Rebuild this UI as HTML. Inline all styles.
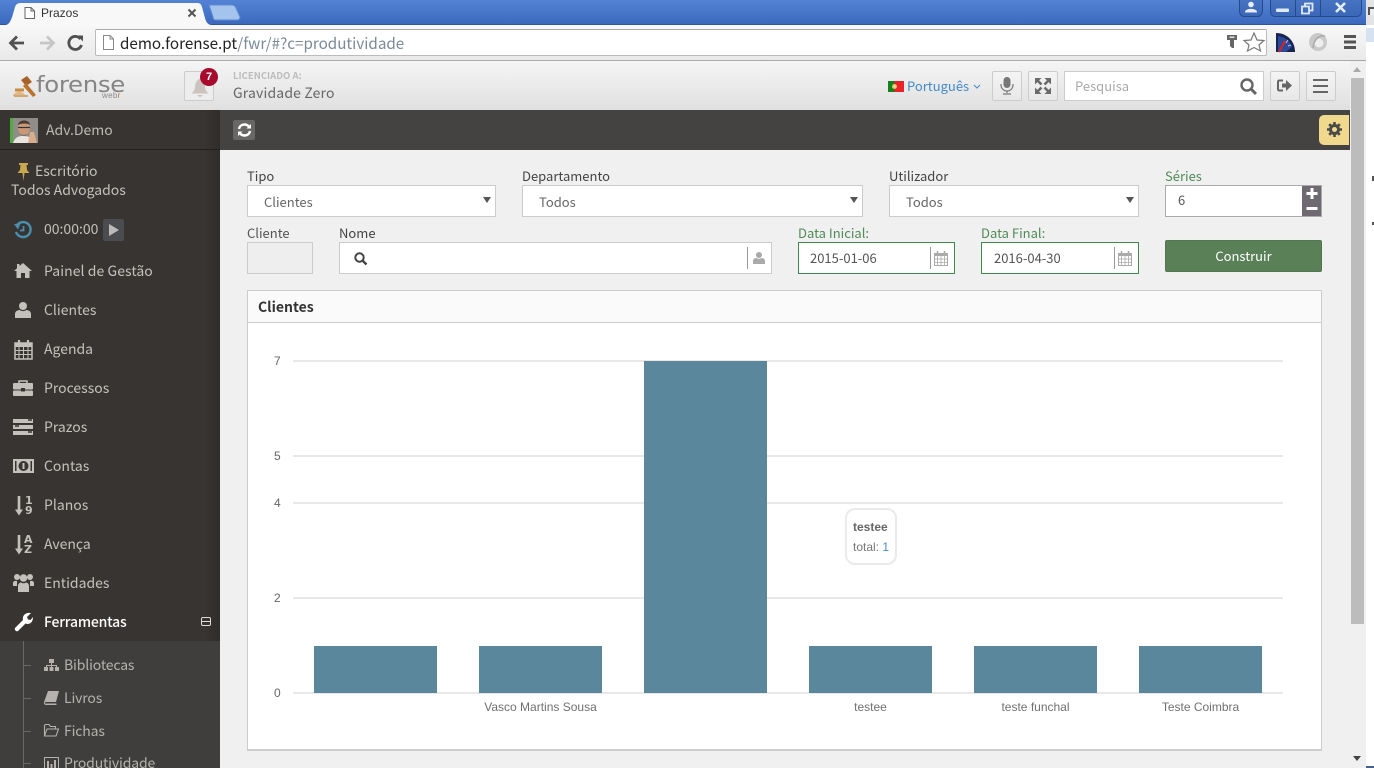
<!DOCTYPE html>
<html><head><meta charset="utf-8"><title>Prazos</title>
<style>
html,body{margin:0;padding:0;width:1374px;height:768px;overflow:hidden;background:#f0f0f0}
body{position:relative;font-family:"Noto Sans CJK JP","Liberation Sans",sans-serif;font-size:13px;color:#555}
.a{position:absolute;box-sizing:border-box}
.t{position:absolute;white-space:nowrap;line-height:20px;height:20px}
.m{color:#c4c0bb;font-size:14px;left:44px}
.s{color:#b5b2ae;font-size:14px;left:64px;letter-spacing:-.15px}
.l{color:#444;font-size:13px}
.g{color:#4f8a57;font-size:13px}
.box{position:absolute;box-sizing:border-box;background:#fff;border:1px solid #ccc}
.btn{position:absolute;box-sizing:border-box;width:30px;height:30px;top:71px;border:1px solid #ccc;border-radius:2px;background:linear-gradient(#f4f4f4,#e8e8e8)}
.ax{position:absolute;font:12px/14px "Liberation Sans",sans-serif;color:#666;white-space:nowrap}
.xl{position:absolute;top:700px;width:165px;text-align:center;font:12px/14px "Liberation Sans",sans-serif;color:#707070;white-space:nowrap}
.gl{position:absolute;left:293px;width:990px;height:2px;background:#e8e8e8}
.bar{position:absolute;width:123px;background:#5a879c}
.d{position:absolute;font:bold 11px/12px "DejaVu Sans",sans-serif;height:12px;color:#c4c0bb;white-space:nowrap}
svg{position:absolute;overflow:visible}
</style></head><body>

<!-- Browser frame -->
<div class="a" style="left:0;top:0;width:1366px;height:25px;background:linear-gradient(#5482d4,#3c69be);border-bottom:1px solid #2f5597"></div>
<svg style="left:0;top:0" width="260" height="26"><path d="M0 25H5C9 25 11 21 13 14L15 7C16 4 18 3 21 3H197C200 3 201 4 202 7L205 18C206 22 208 25 212 25V26H0Z" fill="#f8f8f8"/><path d="M209 5H232C234 5 235 6 236 8L240 17C240 19 239 20 237 20H216C214 20 213 19 213 17L209 5Z" fill="#a4c4ee" stroke="#5d8ad0"/>
<path d="M25 7.500H31L34.500 11V18.500H25Z" fill="#fff" stroke="#666"/><path d="M31 7.500V11H34.500" fill="none" stroke="#666"/>
<path d="M188.500 9.500L195.500 16.500M195.500 9.500L188.500 16.500" stroke="#555" stroke-width="2"/></svg>
<div class="t" style="left:41px;top:3px;font:12px/20px 'Liberation Sans',sans-serif;color:#333">Prazos</div>
<div class="a" style="left:0;top:25px;width:1366px;height:36px;background:linear-gradient(#f8f8f8,#e9e9e9);border-bottom:1px solid #a9a9a9"></div>
<svg style="left:0;top:25px" width="90" height="36"><path d="M24 18H11M17 11.500L10.500 18L17 24.500" fill="none" stroke="#505050" stroke-width="2.800"/><path d="M53 18H40M47 11.500L53.500 18L47 24.500" fill="none" stroke="#c6c6c6" stroke-width="2.800"/><path d="M80.500 14A6.500 6.500 0 1 0 81.500 20" fill="none" stroke="#505050" stroke-width="2.800"/><path d="M77 9.500H83V15.500Z" fill="#505050" transform="translate(0,1)"/></svg>
<div class="a" style="left:95px;top:29px;width:1172px;height:27px;background:#fff;border:1px solid #bbb;border-top-color:#aaa;border-radius:2px"></div>
<svg style="left:103px;top:35px" width="12" height="16"><path d="M.500.500H7L10.500 4V14.500H.500Z" fill="#fff" stroke="#888"/><path d="M7 .500V4H10.500" fill="none" stroke="#888"/></svg>
<div class="t" style="left:120px;top:32px;font-size:15.200px;height:22px;line-height:22px;color:#7a8a97"><span style="color:#222">demo.forense.pt</span>/fwr/#?c=produtividade</div>
<svg style="left:1220px;top:28px" width="154" height="30">
<circle cx="11" cy="9" r="0" fill="none"/>
<path d="M7 7H17V12H14V20H12L10 18V12H7Z" fill="#666"/><rect x="9.500" y="8.500" width="5" height="1.500" fill="#ddd"/>
<path d="M34 7L37 14L44 14.500L39 19L40.500 25L34 21.500L27.500 25L29 19L24 14.500L31 14Z" fill="#fff" stroke="#777" stroke-width="1.200" transform="translate(0,-2)"/>
<path d="M56 5C67 5 75 13 75 24H56Z" fill="#1a2252"/><path d="M58 8C65 9 70 13 72 19L66 24H58Z" fill="#2c4a9a"/><path d="M59 24L65 13" stroke="#e02020" stroke-width="2"/><path d="M68 12L66 15M71 17L68 18" stroke="#b8c4e8"/>
<circle cx="98" cy="14" r="9" fill="#c9c9c9"/><circle cx="99" cy="15" r="4.500" fill="#eee"/><path d="M93 20C94 10 100 7 105 8" fill="none" stroke="#aaa" stroke-width="1.500"/>
<path d="M124 9H136V12H124ZM124 14.500H136V17.500H124ZM124 20H136V23H124Z" fill="#555" transform="translate(0,-2)"/></svg>
<!-- window controls -->
<svg style="left:1239px;top:0" width="130" height="18"><path d="M.500 0V11C.500 14 2 16.500 5 16.500H19C21 16.500 23.500 14 23.500 11V0M31.500 0V11C31.500 14 33 16.500 36 16.500H118C120 16.500 122.500 15 122.500 11V0M56.500 0V16M81.500 0V16" fill="rgba(30,70,140,.25)" stroke="#254a8a"/>
<circle cx="12" cy="4.500" r="2.800" fill="#e8effa"/><path d="M6.500 12C6.500 8.500 17.500 8.500 17.500 12Z" fill="#e8effa" stroke="#e8effa"/>
<rect x="37" y="8.500" width="13" height="3.500" rx="1" fill="#dfe8f8"/>
<path d="M63 6.500H70V13.500H63ZM66 6V3.500H73.500V10.500H70.500" fill="none" stroke="#dfe8f8" stroke-width="1.800"/>
<path d="M97 3L106 12M106 3L97 12" stroke="#e6edf8" stroke-width="2.600"/></svg>
<div class="a" style="left:1366px;top:0;width:8px;height:768px;background:#fff"></div>
<div class="a" style="left:1366px;top:0;width:8px;height:25px;background:#e4e4e4"></div>
<div class="a" style="left:1368px;top:7px;width:6px;height:8px;border:2px solid #555;border-right:0;border-bottom:0;background:#eee"></div>
<div class="a" style="left:1366px;top:28px;width:8px;height:14px;background:#d6e2f2"></div>
<div class="a" style="left:1372px;top:176px;width:2px;height:5px;background:#555"></div>
<div class="a" style="left:1372px;top:222px;width:2px;height:3px;background:#555"></div>
<div class="a" style="left:1366px;top:766px;width:8px;height:2px;background:#47618c"></div>

<!-- App header -->
<div class="a" style="left:0;top:61px;width:1350px;height:49px;background:linear-gradient(#f5f5f5,#e0e0e0)"></div>
<svg style="left:12px;top:75px" width="26" height="24"><path d="M1 20C5 15 11 16 14 21H1Z" fill="#e4b884"/><path d="M9 5L15 1L20 7L14 11Z" fill="#a5622a"/><path d="M14 8L24 20L21 22L11 11Z" fill="#b9732f"/><path d="M3 15H12" stroke="#c98a45" stroke-width="3"/><path d="M2 21H16" stroke="#d0a878" stroke-width="2"/></svg>
<div class="t" style="left:36px;top:71px;height:30px;font:22px/30px 'DejaVu Sans','Liberation Sans',sans-serif;letter-spacing:-.3px;color:#858585;transform-origin:left center;transform:scaleX(1.110)">forense</div>
<div class="t" style="left:102px;top:91px;font:8px/10px 'Liberation Sans',sans-serif;height:10px;color:#888;letter-spacing:.3px">web<span style="color:#b9732f">r</span></div>

<div class="a" style="left:184px;top:71px;width:30px;height:30px;border:1px solid #ccc;border-radius:2px;background:#ededed"></div>
<svg style="left:190px;top:78px" width="20" height="20"><path d="M10 0.500C13 2 15 5 15 9C15 12 17 14 18.500 15.500H1.500C3 14 5 12 5 9C5 5 7 2 10 .500ZM7.500 17H12.500C12 19.500 8 19.500 7.500 17Z" fill="#cbc3bd"/></svg>
<div class="a" style="left:200px;top:68px;width:18px;height:18px;border-radius:50%;background:#a70a2d;color:#fff;font:bold 11px/18px 'Liberation Sans',sans-serif;text-align:center">7</div>
<div class="t" style="left:233px;top:65px;font-size:9.500px;font-weight:700;color:#bdbdbd">LICENCIADO A:</div>
<div class="t" style="left:233px;top:83px;font-size:14px;color:#666;letter-spacing:.15px">Gravidade Zero</div>

<svg style="left:888px;top:81px" width="17" height="12"><rect width="16" height="11" fill="#e8242a"/><rect width="6.500" height="11" fill="#17801f"/><circle cx="6.500" cy="5.500" r="2.500" fill="#e9c54d"/><circle cx="6.500" cy="5.500" r="1.200" fill="#d9d9d9"/></svg>
<div class="t" style="left:907px;top:76px;font-size:13px;color:#428bca">Português</div>
<svg style="left:973px;top:84px" width="9" height="6"><path d="M1 1L4 4L7 1" fill="none" stroke="#428bca"/></svg>

<div class="btn" style="left:992px"></div>
<svg style="left:1000px;top:77px" width="14" height="19"><rect x="3.500" y="0" width="7" height="11" rx="3.500" fill="#777"/><path d="M1 7V8A6 6 0 0 0 13 8V7M7 14V16M3 17H11" fill="none" stroke="#777" stroke-width="1.200"/></svg>
<div class="btn" style="left:1028px"></div>
<svg style="left:1035px;top:78px" width="16" height="16"><path d="M0 0H6.500L0 6.500ZM16 0V6.500L9.500 0ZM0 16V9.500L6.500 16ZM16 16H9.500L16 9.500Z" fill="#6a6a6a"/><path d="M2.500 2.500L6.500 6.500M13.500 2.500L9.500 6.500M2.500 13.500L6.500 9.500M13.500 13.500L9.500 9.500" stroke="#6a6a6a" stroke-width="2.600"/></svg>
<div class="box" style="left:1064px;top:71px;width:200px;height:30px"></div>
<div class="t" style="left:1075px;top:76px;font-size:13px;color:#a9a9a9">Pesquisa</div>
<svg style="left:1240px;top:78px" width="18" height="18"><circle cx="7" cy="7" r="5.500" fill="none" stroke="#666" stroke-width="2.400"/><path d="M11 11L16 16" stroke="#666" stroke-width="3"/></svg>
<div class="btn" style="left:1270px"></div>
<svg style="left:1277px;top:79px" width="16" height="14"><path d="M6 1.500H2.500C1.500 1.500 1 2 1 3V10C1 11 1.500 11.500 2.500 11.500H6" fill="none" stroke="#666" stroke-width="2"/><path d="M5 4.500H9V1L15 6.500L9 12V8.500H5Z" fill="#666"/></svg>
<div class="btn" style="left:1306px"></div>
<svg style="left:1313px;top:79px" width="16" height="14"><path d="M0 1H15M0 7H15M0 13H15" stroke="#666" stroke-width="2"/></svg>

<!-- Dark bars -->
<div class="a" style="left:220px;top:110px;width:1130px;height:40px;background:#454342"></div>
<div class="a" style="left:0;top:110px;width:220px;height:658px;background:linear-gradient(90deg,#383432 0,#383432 205px,#2f2c2a 220px)"></div>
<div class="a" style="left:0;top:149px;width:220px;height:1px;background:#232120"></div>
<div class="a" style="left:10px;top:118px;width:3px;height:25px;background:#4cae3c"></div>
<svg style="left:13px;top:118px" width="25" height="25"><rect width="25" height="25" fill="#8f8c89"/><path d="M0 25C2 19 6 18 10 18C16 18 20 20 22 25Z" fill="#e8e4df"/><ellipse cx="11" cy="10" rx="6" ry="7.500" fill="#c99878"/><path d="M5 7C5.500 1 16.500 1 17 7C15 5 8 5 5 7Z" fill="#4a3a30"/><path d="M5.500 13C7 19 15 19 16.500 13L15.500 15.500C13 17.500 9 17.500 6.500 15.500Z" fill="#55463c"/><path d="M5 9.500H17" stroke="#333" stroke-width="1.200"/><path d="M15 25L17 14L21 14L24 25Z" fill="#d9ad8c"/></svg>
<div class="t" style="left:46px;top:120px;font-size:14px;color:#bdb9b4">Adv.Demo</div>
<div class="a" style="left:233px;top:120px;width:22px;height:20px;border-radius:2px;background:#696766"></div>
<svg style="left:237px;top:123px" width="15" height="14"><path d="M2 6C2.500 3 5 1.500 7.500 1.500C9.500 1.500 11 2.500 12 3.500" fill="none" stroke="#fff" stroke-width="2.400"/><path d="M9.500 5.500H14V1Z" fill="#fff"/><path d="M13 8C12.500 11 10 12.500 7.500 12.500C5.500 12.500 4 11.500 3 10.500" fill="none" stroke="#fff" stroke-width="2.400"/><path d="M5.500 8.500H1V13Z" fill="#fff"/></svg>
<div class="a" style="left:1319px;top:115px;width:30px;height:30px;background:#f0d98c;border-radius:5px 0 0 5px"></div>
<svg style="left:1327px;top:122px" width="15" height="15" viewBox="0 0 15 15"><circle cx="7.500" cy="7.500" r="4" fill="none" stroke="#4a4a4a" stroke-width="3"/><path d="M7.500 0V3M7.500 12V15M0 7.500H3M12 7.500H15M2.200 2.200L4.300 4.300M10.700 10.700L12.800 12.800M12.800 2.200L10.700 4.300M4.300 10.700L2.200 12.800" stroke="#4a4a4a" stroke-width="2.600"/></svg>

<!-- Sidebar -->
<svg style="left:16px;top:163px" width="14" height="18"><path d="M3 0H12V2H10.500L11 7L13.500 10H8.500L7.500 18L6.500 10H1.500L4 7L4.500 2H3Z" fill="#c9a84f"/></svg>
<div class="t" style="left:35px;top:161px;font-size:14px;color:#c4c0bb">Escritório</div>
<div class="t" style="left:11px;top:180px;font-size:14px;color:#c4c0bb">Todos Advogados</div>
<svg style="left:14px;top:221px" width="18" height="18"><path d="M2.500 5A7.500 7.500 0 1 1 2 11" fill="none" stroke="#4a90b0" stroke-width="2.400"/><path d="M0 3L6.500 2.500L4 8.500Z" fill="#4a90b0"/><path d="M9.500 5V9.500H6" fill="none" stroke="#4a90b0" stroke-width="1.800"/></svg>
<div class="t" style="left:44px;top:219px;font-size:14px;color:#c4c0bb">00:00:00</div>
<div class="a" style="left:103px;top:219px;width:21px;height:22px;border-radius:2px;background:#4a4c50"></div>
<svg style="left:109px;top:224px" width="11" height="12"><path d="M0 0L10 6L0 12Z" fill="#bdbab7"/></svg>

<svg style="left:14px;top:263px" width="18" height="15"><path d="M9 0L18 8H15.500V15H11V10H7V15H2.500V8H0L3 5.300V1H5.500V3L9 0Z" fill="#c4c0bb"/></svg>
<div class="t m" style="top:261px;letter-spacing:.06px">Painel de Gestão</div>
<svg style="left:15px;top:302px" width="16" height="16"><circle cx="8" cy="4" r="4" fill="#c4c0bb"/><path d="M0 16V12C0 9 3 8 5 8C6 9.500 10 9.500 11 8C13 8 16 9 16 12V16Z" fill="#c4c0bb"/></svg>
<div class="t m" style="top:300px">Clientes</div>
<svg style="left:14px;top:340px" width="19" height="19"><path d="M1 3H18V19H1Z" fill="none" stroke="#c4c0bb" stroke-width="1.500"/><rect x="1" y="3" width="17" height="4" fill="#c4c0bb"/><path d="M5 0V5M14 0V5" stroke="#c4c0bb" stroke-width="2.200"/><path d="M5 7V19M9.500 7V19M14 7V19M1 10.500H18M1 14.500H18" stroke="#c4c0bb"/></svg>
<div class="t m" style="top:339px">Agenda</div>
<svg style="left:13px;top:380px" width="20" height="16"><path d="M6 3V1H14V3" fill="none" stroke="#c4c0bb" stroke-width="1.500"/><rect y="3" width="20" height="6.500" rx="1" fill="#c4c0bb"/><rect y="10.500" width="20" height="5.500" rx="1" fill="#c4c0bb"/><rect x="8" y="8" width="4" height="3.500" fill="#383432"/></svg>
<div class="t m" style="top:378px">Processos</div>
<svg style="left:13px;top:419px" width="20" height="16"><path d="M0 0H20V4H0ZM0 6H20V10H0ZM0 12H20V16H0Z" fill="#c4c0bb"/><path d="M15 1H19M2 7H6M15 13H19" stroke="#383432" stroke-width="1.500"/></svg>
<div class="t m" style="top:417px">Prazos</div>
<svg style="left:13px;top:459px" width="21" height="14"><rect width="21" height="14" fill="#c4c0bb"/><circle cx="10.500" cy="7" r="5" fill="#383432"/><rect x="9.500" y="4" width="2" height="6" fill="#c4c0bb"/><rect x="2" y="2" width="1.500" height="10" fill="#383432"/><rect x="17.500" y="2" width="1.500" height="10" fill="#383432"/></svg>
<div class="t m" style="top:456px">Contas</div>
<svg style="left:15px;top:496px" width="9" height="20"><path d="M4 0V14" stroke="#c4c0bb" stroke-width="2.600"/><path d="M0 13.500H8L4 19.500Z" fill="#c4c0bb"/></svg>
<div class="d" style="left:25px;top:495px">1</div>
<div class="d" style="left:25px;top:505px">9</div>
<div class="t m" style="top:495px">Planos</div>
<svg style="left:15px;top:535px" width="9" height="20"><path d="M4 0V14" stroke="#c4c0bb" stroke-width="2.600"/><path d="M0 13.500H8L4 19.500Z" fill="#c4c0bb"/></svg>
<div class="d" style="left:24px;top:534px">A</div>
<div class="d" style="left:24px;top:544px">Z</div>
<div class="t m" style="top:534px">Avença</div>
<svg style="left:13px;top:573px" width="21" height="20"><circle cx="4" cy="4" r="3" fill="#c4c0bb"/><circle cx="17" cy="4" r="3" fill="#c4c0bb"/><circle cx="10.500" cy="5" r="3.800" fill="#c4c0bb"/><path d="M0 13V10C0 8 2 7.500 4 8V13ZM21 13V10C21 8 19 7.500 17 8V13Z" fill="#c4c0bb"/><path d="M5 19V13C5 10.500 7 9.500 8 9.500C9.500 10.500 11.500 10.500 13 9.500C14 9.500 16 10.500 16 13V19Z" fill="#c4c0bb"/></svg>
<div class="t m" style="top:573px">Entidades</div>
<svg style="left:14px;top:612px" width="19" height="20"><path d="M1 16L9 8C8 4 11 0 17 1L13 5L14 7.500L16.500 8L19 5C19 11 15 13 11.500 11.500L4 19C2.500 20 0 18 1 16Z" fill="#fff"/></svg>
<div class="t" style="left:44px;top:612px;font-size:14px;color:#fff;font-weight:500;letter-spacing:-.18px">Ferramentas</div>
<svg style="left:201px;top:617px" width="10" height="9"><rect x=".500" y=".500" width="9" height="8" rx="1.500" fill="none" stroke="#ddd"/><path d="M1 4.500H9" stroke="#ddd"/></svg>

<div class="a" style="left:0;top:641px;width:220px;height:127px;background:#3f3e3d"></div>
<div class="a" style="left:23px;top:641px;width:1px;height:127px;background:#6a6865"></div>
<div class="a" style="left:23px;top:665px;width:8px;height:1px;background:#6a6865"></div>
<div class="a" style="left:23px;top:698px;width:8px;height:1px;background:#6a6865"></div>
<div class="a" style="left:23px;top:731px;width:8px;height:1px;background:#6a6865"></div>
<div class="a" style="left:23px;top:763px;width:8px;height:1px;background:#6a6865"></div>
<svg style="left:44px;top:659px" width="15" height="12"><path d="M5 0H10V4H5ZM0 8H4V12H0ZM5.500 8H9.500V12H5.500ZM11 8H15V12H11ZM7 4H8V6H13V8H12V7H8V8H7V7H3V8H2V6H7Z" fill="#b5b2ae"/></svg>
<div class="t s" style="top:655px">Bibliotecas</div>
<svg style="left:44px;top:691px" width="15" height="14"><path d="M4 0H15L12 11H1L1 12.500H12.500V14H2C0 14 0 12 0 11Z" fill="#b5b2ae"/></svg>
<div class="t s" style="top:688px">Livros</div>
<svg style="left:44px;top:724px" width="15" height="13"><path d="M.500 12V2C.500 1 1 .500 2 .500H5L6.500 2.500H11.500V5M.500 12L3 5H14.500L12 12Z" fill="none" stroke="#b5b2ae" stroke-width="1.100"/></svg>
<div class="t s" style="top:721px">Fichas</div>
<svg style="left:44px;top:757px" width="15" height="13"><rect x=".500" y=".500" width="14" height="12" fill="none" stroke="#b5b2ae"/><path d="M3 4H5V12H3ZM6.500 7H8.500V12H6.500ZM10 3H12V12H10Z" fill="#b5b2ae"/></svg>
<div class="t s" style="top:753px">Produtividade</div>

<!-- Form -->
<div class="t l" style="left:247px;top:166px">Tipo</div>
<div class="box" style="left:247px;top:185px;width:249px;height:32px"></div>
<div class="t" style="left:264px;top:192px;color:#666;font-size:13px">Clientes</div>
<svg style="left:483px;top:197px" width="8" height="7"><path d="M0 0H8L4 6Z" fill="#555"/></svg>
<div class="t l" style="left:522px;top:166px">Departamento</div>
<div class="box" style="left:522px;top:185px;width:341px;height:32px"></div>
<div class="t" style="left:539px;top:192px;color:#666;font-size:13px">Todos</div>
<svg style="left:850px;top:197px" width="8" height="7"><path d="M0 0H8L4 6Z" fill="#555"/></svg>
<div class="t l" style="left:889px;top:166px">Utilizador</div>
<div class="box" style="left:889px;top:185px;width:250px;height:32px"></div>
<div class="t" style="left:906px;top:192px;color:#666;font-size:13px">Todos</div>
<svg style="left:1126px;top:197px" width="8" height="7"><path d="M0 0H8L4 6Z" fill="#555"/></svg>
<div class="t g" style="left:1165px;top:166px">Séries</div>
<div class="box" style="left:1165px;top:185px;width:157px;height:32px;border-color:#aaa"></div>
<div class="t" style="left:1178px;top:190px;color:#555;font-size:13px">6</div>
<div class="a" style="left:1302px;top:186px;width:19px;height:30px;background:#6f6a72"></div>
<svg style="left:1305px;top:187px" width="14" height="28"><path d="M7 1V12M1.500 6.500H12.500" stroke="#fff" stroke-width="3"/><path d="M1.500 21.500H12.500" stroke="#fff" stroke-width="3"/></svg>

<div class="t" style="left:247px;top:223px;color:#555;font-size:13px">Cliente</div>
<div class="a" style="left:247px;top:242px;width:66px;height:32px;background:#eee;border:1px solid #ccc"></div>
<div class="t l" style="left:339px;top:223px">Nome</div>
<div class="box" style="left:339px;top:242px;width:433px;height:32px"></div>
<svg style="left:354px;top:252px" width="14" height="14"><circle cx="5.500" cy="5.500" r="4.200" fill="none" stroke="#444" stroke-width="2"/><path d="M8.500 8.500L12.500 12.500" stroke="#444" stroke-width="2.400"/></svg>
<div class="a" style="left:747px;top:247px;width:1px;height:22px;background:#999"></div>
<svg style="left:753px;top:252px" width="12" height="12"><circle cx="6" cy="3" r="3" fill="#aaa"/><path d="M0 12V9C0 7 2 6 3.500 6C4.500 7 7.500 7 8.500 6C10 6 12 7 12 9V12Z" fill="#aaa"/></svg>
<div class="t g" style="left:798px;top:223px">Data Inicial:</div>
<div class="box" style="left:798px;top:242px;width:157px;height:32px;border-color:#3d8a4a"></div>
<div class="t" style="left:810px;top:248px;color:#555;font-size:13px">2015-01-06</div>
<div class="a" style="left:930px;top:247px;width:1px;height:22px;background:#999"></div>
<svg style="left:934px;top:251px" width="14" height="15"><rect x=".500" y="2.500" width="13" height="12" fill="none" stroke="#aaa"/><rect x="0" y="2" width="14" height="3" fill="#aaa"/><path d="M3.500 0V4M10.500 0V4" stroke="#aaa" stroke-width="1.500"/><path d="M3.500 5V15M7 5V15M10.500 5V15M0 8H14M0 11.500H14" stroke="#aaa" stroke-width=".8"/></svg>
<div class="t g" style="left:981px;top:223px">Data Final:</div>
<div class="box" style="left:981px;top:242px;width:158px;height:32px;border-color:#3d8a4a"></div>
<div class="t" style="left:994px;top:248px;color:#555;font-size:13px">2016-04-30</div>
<div class="a" style="left:1114px;top:247px;width:1px;height:22px;background:#999"></div>
<svg style="left:1118px;top:251px" width="14" height="15"><rect x=".500" y="2.500" width="13" height="12" fill="none" stroke="#aaa"/><rect x="0" y="2" width="14" height="3" fill="#aaa"/><path d="M3.500 0V4M10.500 0V4" stroke="#aaa" stroke-width="1.500"/><path d="M3.500 5V15M7 5V15M10.500 5V15M0 8H14M0 11.500H14" stroke="#aaa" stroke-width=".8"/></svg>
<div class="a" style="left:1165px;top:240px;width:157px;height:32px;background:#5a8058;border:1px solid #527650;border-radius:2px;color:#fff;text-align:center;font-size:13px;line-height:30px">Construir</div>

<!-- Panel -->
<div class="a" style="left:247px;top:290px;width:1075px;height:461px;background:#fff;border:1px solid #ccc;border-bottom:2px solid #ccc"></div>
<div class="a" style="left:248px;top:291px;width:1073px;height:32px;background:#fafafa;border-bottom:1px solid #ccc"></div>
<div class="t" style="left:258px;top:297px;font-size:14px;font-weight:700;color:#333">Clientes</div>

<div class="gl" style="top:360px"></div><div class="gl" style="top:455px"></div><div class="gl" style="top:502px"></div><div class="gl" style="top:597px"></div><div class="gl" style="top:692px"></div>
<div class="ax" style="left:274px;top:354px">7</div><div class="ax" style="left:274px;top:449px">5</div><div class="ax" style="left:274px;top:496px">4</div><div class="ax" style="left:274px;top:591px">2</div><div class="ax" style="left:274px;top:686px">0</div>
<div class="bar" style="left:314px;top:646px;height:47px"></div>
<div class="bar" style="left:479px;top:646px;height:47px"></div>
<div class="bar" style="left:644px;top:361px;height:332px"></div>
<div class="bar" style="left:809px;top:646px;height:47px"></div>
<div class="bar" style="left:974px;top:646px;height:47px"></div>
<div class="bar" style="left:1139px;top:646px;height:47px"></div>
<div class="xl" style="left:458px">Vasco Martins Sousa</div>
<div class="xl" style="left:788px">testee</div>
<div class="xl" style="left:953px">teste funchal</div>
<div class="xl" style="left:1118px">Teste Coimbra</div>

<div class="a" style="left:845px;top:508px;width:52px;height:57px;background:#fff;border:2px solid #eaeaea;border-radius:10px"></div>
<div class="t" style="left:853px;top:517px;font:bold 12px/20px 'Liberation Sans',sans-serif;color:#666">testee</div>
<div class="t" style="left:853px;top:537px;font:12px/20px 'Liberation Sans',sans-serif;color:#777">total: <span style="color:#428bca">1</span></div>

<!-- Page scrollbar -->
<div class="a" style="left:1351px;top:78px;width:13px;height:546px;background:#bcbcbc"></div>
<svg style="left:1353px;top:67px" width="9" height="6"><path d="M0 5H8L4 0Z" fill="#aaa"/></svg>
<svg style="left:1353px;top:756px" width="9" height="6"><path d="M0 0H8L4 5Z" fill="#444"/></svg>
</body></html>
